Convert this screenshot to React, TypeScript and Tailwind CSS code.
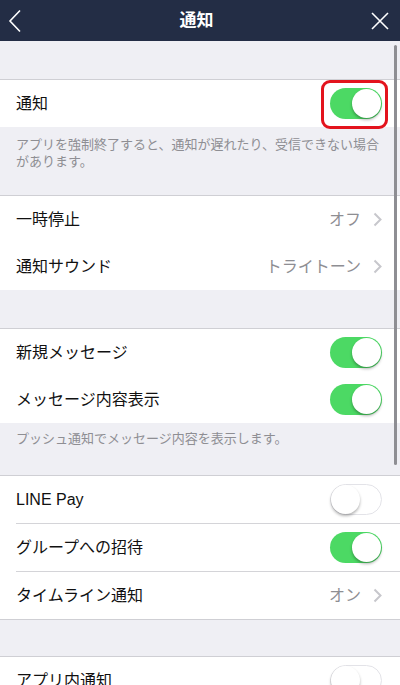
import React from "react";

const font = {
  fontFamily: '"Liberation Sans", "Noto Sans CJK JP", sans-serif',
};

function Toggle({ on }: { on: boolean }) {
  return on ? (
    <div className="w-[52px] h-[31px] rounded-full bg-[#4cd964] relative">
      <div className="absolute right-[1px] top-[1px] w-[29px] h-[29px] rounded-full bg-white shadow-[0_2px_3px_rgba(0,0,0,0.3)]" />
    </div>
  ) : (
    <div className="w-[52px] h-[31px] rounded-full bg-white border border-[#e3e3e8] relative">
      <div className="absolute left-0 top-0 w-[29px] h-[29px] rounded-full bg-white shadow-[0_2px_3px_rgba(0,0,0,0.3)]" />
    </div>
  );
}

function Chevron() {
  return (
    <svg width="9" height="15" viewBox="0 0 9 15" className="ml-[12px]">
      <polyline points="1.5,1.5 7.5,7.5 1.5,13.5" fill="none" stroke="#c7c7cc" strokeWidth="2" />
    </svg>
  );
}

function Row({
  label,
  toggle,
  value,
  highlight,
}: {
  label: string;
  toggle?: boolean;
  value?: string;
  highlight?: boolean;
}) {
  return (
    <div className="h-[47px] flex items-center justify-between pl-[16px] pr-[18px] bg-white">
      <span className="text-[16px] text-[#111]">{label}</span>
      {value !== undefined ? (
        <div className="flex items-center">
          <span className="text-[16px] text-[#8e8e93]">{value}</span>
          <Chevron />
        </div>
      ) : (
        <div className="relative">
          <Toggle on={!!toggle} />
          {highlight && (
            <div className="absolute left-[-9px] right-[-6px] top-[-8px] bottom-[-10px] border-[3px] border-[#e3131d] rounded-[9px]" />
          )}
        </div>
      )}
    </div>
  );
}

function Inset() {
  return (
    <div className="bg-white pl-[16px]">
      <div className="h-px bg-[#d4d4d8]" />
    </div>
  );
}

function Line() {
  return <div className="h-px bg-[#cfcfd4]" />;
}

export default function App() {
  return (
    <div className="w-[400px] h-[685px] overflow-hidden bg-[#efeff4] relative" style={font}>
      <header className="h-[41px] bg-[#232d45] flex items-center justify-between px-[8px]">
        <svg width="14" height="24" viewBox="0 0 14 24">
          <polyline points="12,1.5 2,12 12,22.5" fill="none" stroke="#ffffff" strokeWidth="1.6" />
        </svg>
        <span className="text-white text-[17px] font-bold">通知</span>
        <svg width="18" height="18" viewBox="0 0 18 18" className="mr-[3px]">
          <path d="M1 1 L17 17 M17 1 L1 17" stroke="#ffffff" strokeWidth="1.6" />
        </svg>
      </header>

      <div className="h-[38px]" />
      <Line />
      <Row label="通知" toggle highlight />
      <div className="h-[68px] px-[16px] pt-[9px] text-[13px] leading-[17px] text-[#8e8e93] whitespace-nowrap">
        アプリを強制終了すると、通知が遅れたり、受信できない場合
        <br />
        があります。
      </div>
      <Line />
      <Row label="一時停止" value="オフ" />
      <Row label="通知サウンド" value="トライトーン" />
      <div className="h-[38px]" />
      <Line />
      <Row label="新規メッセージ" toggle />
      <Row label="メッセージ内容表示" toggle />
      <div className="h-[52px] px-[16px] pt-[7px] text-[13px] leading-[17px] text-[#8e8e93]">
        プッシュ通知でメッセージ内容を表示します。
      </div>
      <Line />
      <Row label="LINE Pay" />
      <Inset />
      <Row label="グループへの招待" toggle />
      <Inset />
      <Row label="タイムライン通知" value="オン" />
      <Line />
      <div className="h-[36px]" />
      <Line />
      <Row label="アプリ内通知" />

      <div className="absolute right-[3px] top-[45px] w-[3px] h-[420px] rounded-full bg-[#8e8e93]" />
    </div>
  );
}
